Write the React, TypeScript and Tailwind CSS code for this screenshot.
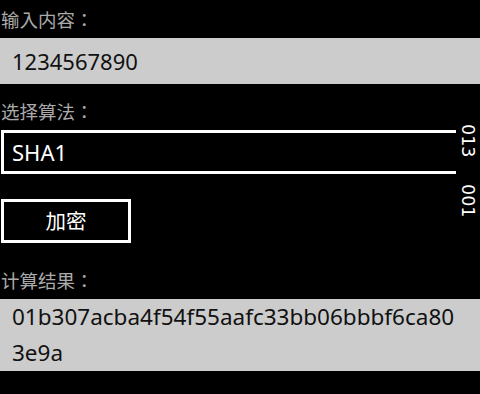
import React from "react";

export default function App() {
  const cjk = { fontFamily: '"Noto Sans", "Noto Sans CJK TC", sans-serif' };
  return (
    <div
      className="relative w-[480px] h-[394px] bg-black overflow-hidden"
      style={cjk}
    >
      <div className="h-[38px] pt-[8px] pl-[1px] text-[18.5px] leading-[24px] text-[#aaaaaa]">
        输入内容：
      </div>
      <div className="h-[46px] bg-[#cccccc] px-[12px] flex items-center text-[22px] text-[#111111]">
        1234567890
      </div>
      <div className="h-[46px] pt-[16px] pl-[1px] text-[18.5px] leading-[24px] text-[#aaaaaa]">
        选择算法：
      </div>
      <div className="ml-[1px] w-[490px] h-[44px] border-[3px] border-white px-[8px] flex items-center text-[22px] text-white">
        SHA1
      </div>
      <div className="h-[25px]" />
      <div className="ml-[1px] w-[130px] h-[44px] border-[3px] border-white flex items-center justify-center text-[20.5px] text-white">
        加密
      </div>
      <div className="h-[56px] pt-[26px] pl-[1px] text-[18.5px] leading-[24px] text-[#aaaaaa]">
        计算结果：
      </div>
      <div className="h-[72px] bg-[#cccccc] pl-[12px] pr-[18px] text-[22.5px] leading-[36px] text-[#111111] break-all">
        01b307acba4f54f55aafc33bb06bbbf6ca803e9a
      </div>

      <div
        className="absolute left-[456px] top-[118px] w-[24px] h-[110px] bg-black flex flex-col items-center pt-[6px] gap-[27px] text-white text-[17.5px] leading-[20px]"
        style={{ fontFamily: '"DejaVu Sans", sans-serif' }}
      >
        <span className="[writing-mode:vertical-rl]">013</span>
        <span className="[writing-mode:vertical-rl]">001</span>
      </div>
    </div>
  );
}
